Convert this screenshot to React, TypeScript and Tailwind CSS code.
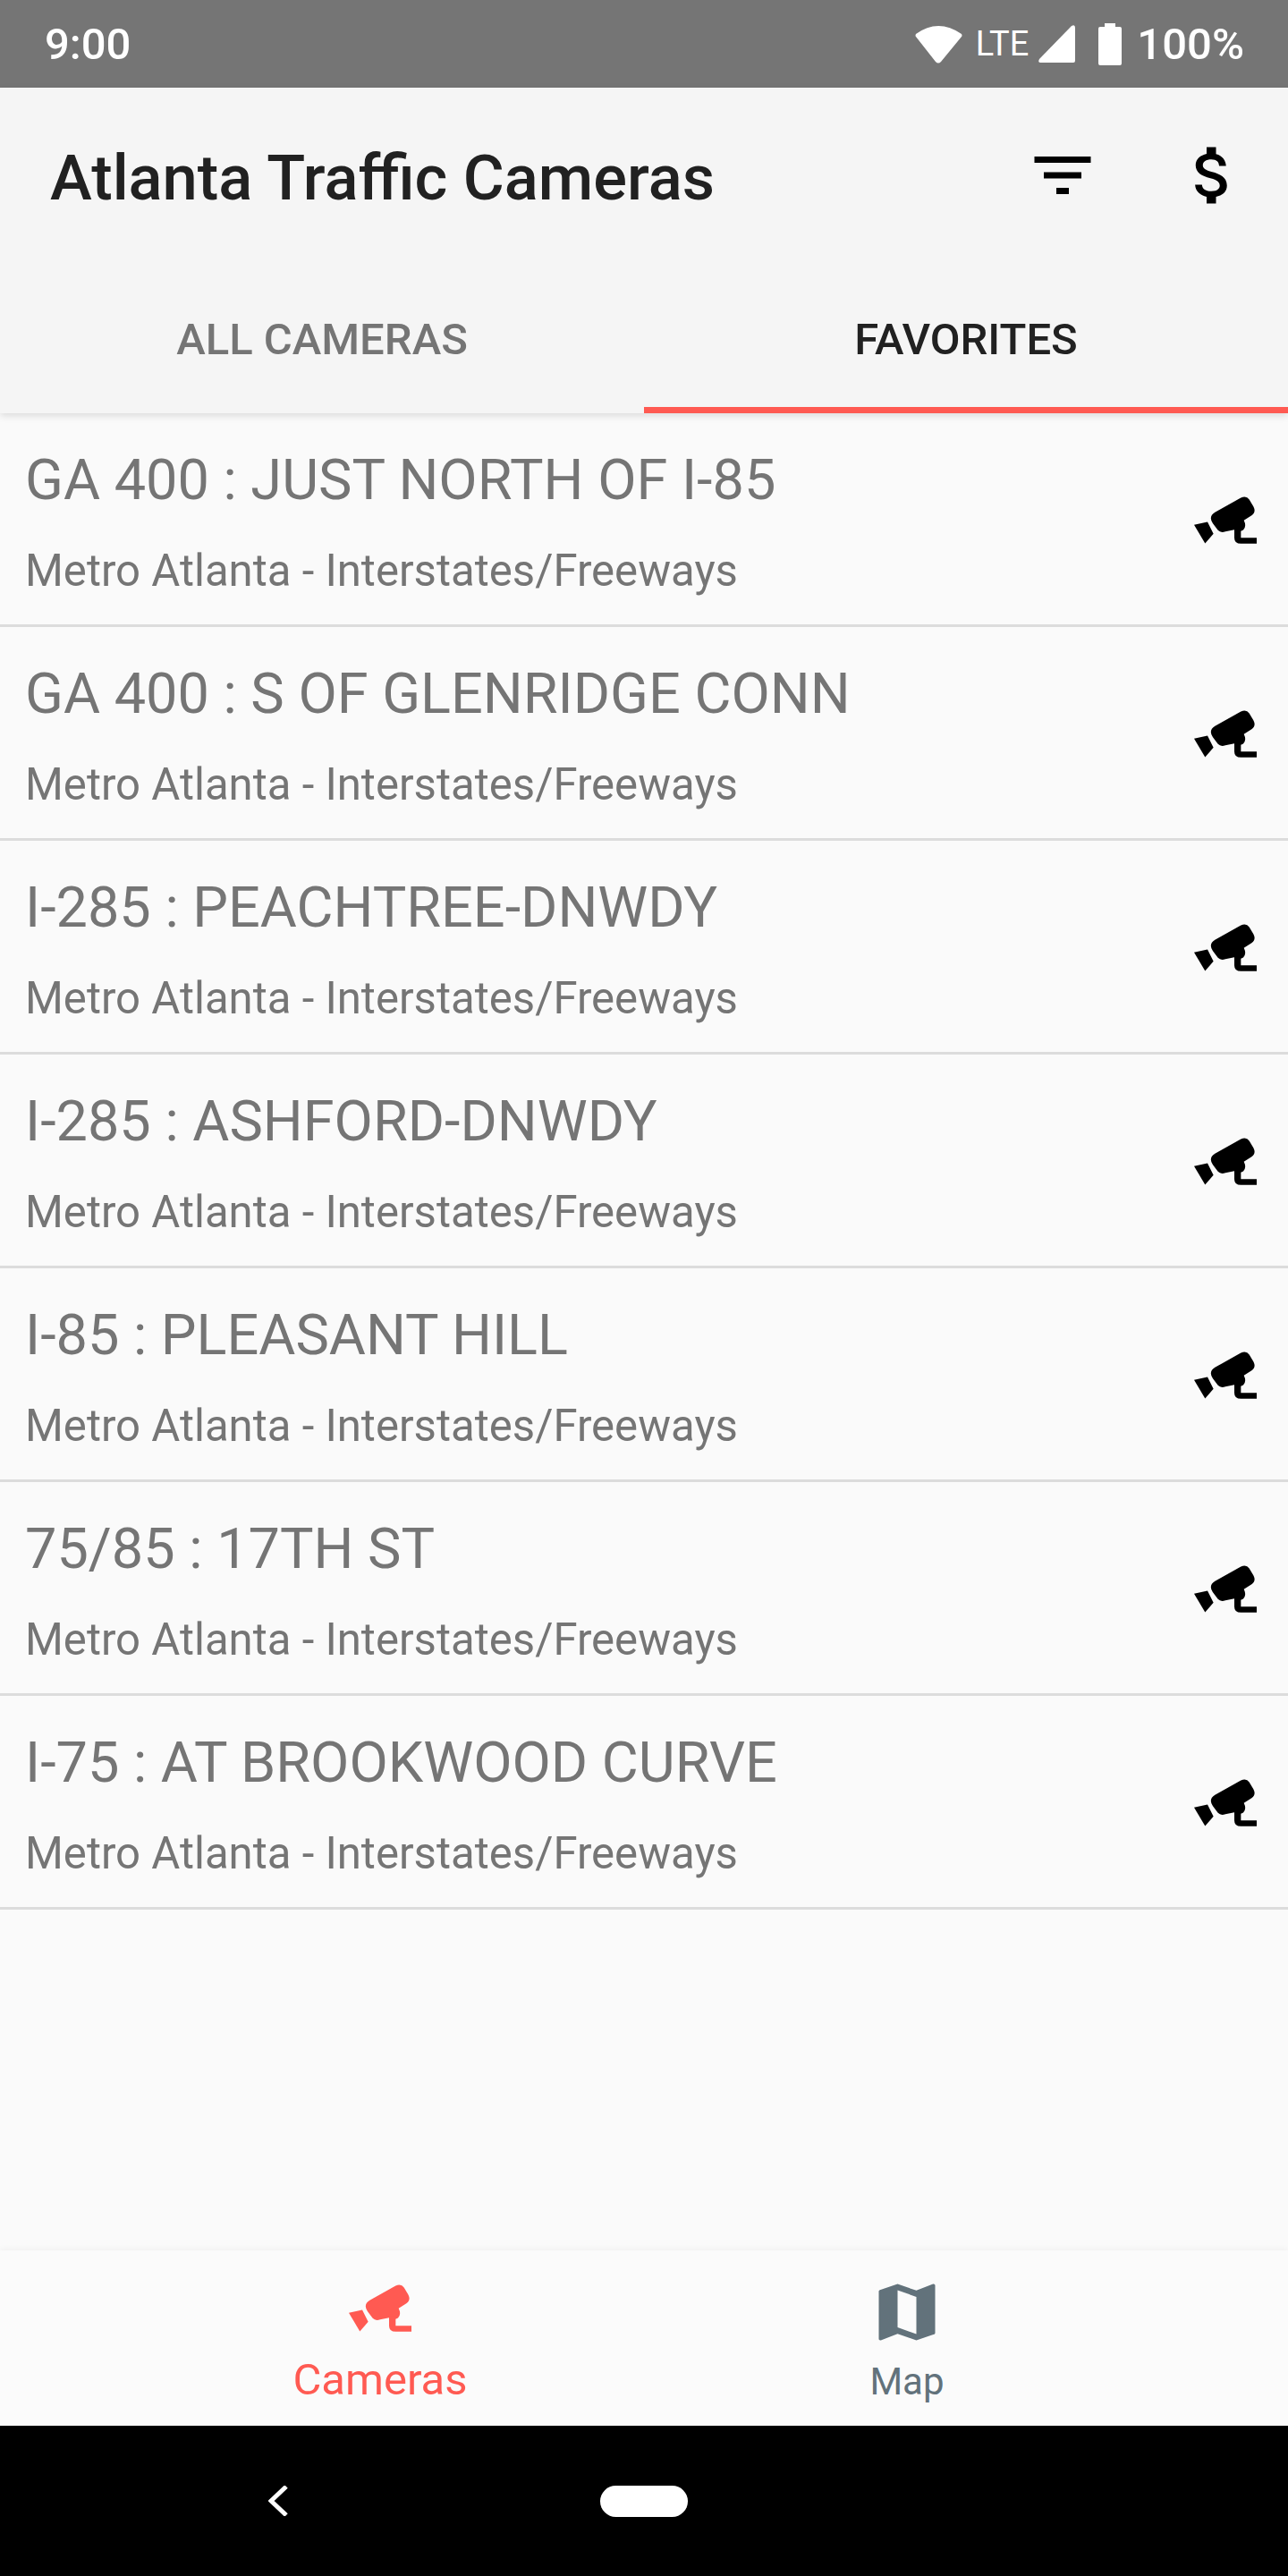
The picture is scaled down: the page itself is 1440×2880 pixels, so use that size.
import React from 'react';

const cameras = [
  'GA 400 : JUST NORTH OF I-85',
  'GA 400 : S OF GLENRIDGE CONN',
  'I-285 : PEACHTREE-DNWDY',
  'I-285 : ASHFORD-DNWDY',
  'I-85 : PLEASANT HILL',
  '75/85 : 17TH ST',
  'I-75 : AT BROOKWOOD CURVE',
];

const CctvIcon = ({ className }: { className: string }) => (
  <svg viewBox="105 75 210 158" className={className} fill="currentColor">
    <path d="M175 128 L262 79 Q280 70 290 85 L304 108 Q314 128 298 138 L272 155 Q282 175 270 187 Q258 196 240 186 L210 192 Q195 198 185 188 L168 165 Q152 142 175 128 Z" />
    <path d="M240 180 L262 180 L262 213 L315 213 L315 233 L262 233 Q240 233 240 213 Z" />
    <path d="M105 170 L150 160 L170 200 L142 232 Z" />
  </svg>
);

const CameraRow = ({ name }: { name: string }) => (
  <div className="h-[239px] border-b-[3px] border-[#dcdcdc] flex items-center justify-between pl-[28px] pr-[35px] shrink-0">
    <div className="flex flex-col pt-[7px]">
      <span className="text-[63px] leading-[74px] text-[#757575] mb-[35px]">{name}</span>
      <span className="text-[49.1px] leading-[58px] text-[#757575]">Metro Atlanta - Interstates/Freeways</span>
    </div>
    <CctvIcon className="w-[70px] h-[53px] text-black mt-[3px]" />
  </div>
);

export default function App() {
  return (
    <div className="w-[1440px] h-[2880px] flex flex-col bg-[#fafafa] overflow-hidden font-['Roboto',sans-serif]">
      {/* status bar */}
      <div className="h-[98px] bg-[#757575] flex items-center justify-between pl-[50px] pr-[49px] text-white shrink-0">
        <span className="text-[49px] leading-none font-medium">9:00</span>
        <div className="flex items-center">
          <svg viewBox="0 0 53 43" className="w-[53px] h-[43px]" fill="currentColor">
            <path d="M1 10 Q26 -8 52 10 Q53 12 52 13 L29 41 Q26 44 23 41 L1 13 Q0 12 1 10 Z" />
          </svg>
          <span className="text-[38px] leading-none ml-[15px]">LTE</span>
          <svg viewBox="0 0 43 43" className="w-[43px] h-[43px] ml-[10px]" fill="currentColor">
            <path d="M38 1 Q42 -1 42 3 L42 40 Q42 42 40 42 L3 42 Q0 42 2 38 Z" />
          </svg>
          <svg viewBox="0 0 26 47" className="w-[26px] h-[47px] ml-[25px]" fill="currentColor">
            <path d="M7 0 H19 V4 H24 Q26 4 26 6 V45 Q26 47 24 47 H2 Q0 47 0 45 V6 Q0 4 2 4 H7 Z" />
          </svg>
          <span className="text-[49px] leading-none font-medium ml-[17px]">100%</span>
        </div>
      </div>

      {/* app bar + tabs */}
      <div className="bg-[#f5f5f5] shrink-0 shadow-[0_3px_8px_rgba(0,0,0,0.12)] z-10">
        <div className="h-[196px] flex items-center pl-[56px] pr-[42px]">
          <span className="text-[70.5px] leading-none font-medium text-[#212121] flex-1 pt-[7px]">Atlanta Traffic Cameras</span>
          <svg viewBox="0 0 24 24" className="w-[84px] h-[84px] text-black" fill="currentColor">
            <path d="M10 18h4v-2h-4v2zM3 6v2h18V6H3zm3 7h12v-2H6v2z" />
          </svg>
          <svg viewBox="0 0 24 24" className="w-[84px] h-[84px] ml-[84px] text-black" fill="currentColor">
            <path d="M11.8 10.9c-2.27-.59-3-1.2-3-2.15 0-1.09 1.01-1.85 2.7-1.85 1.78 0 2.44.85 2.5 2.1h2.21c-.07-1.72-1.12-3.3-3.21-3.81V3h-3v2.16c-1.94.42-3.5 1.68-3.5 3.61 0 2.31 1.91 3.46 4.7 4.13 2.5.6 3 1.48 3 2.41 0 .69-.49 1.79-2.7 1.79-2.06 0-2.87-.92-2.98-2.1h-2.2c.12 2.19 1.76 3.42 3.68 3.83V21h3v-2.15c1.95-.37 3.5-1.5 3.5-3.55 0-2.84-2.43-3.81-4.7-4.4z" />
          </svg>
        </div>
        <div className="h-[168px] flex">
          <div className="w-[720px] flex items-center justify-center pt-[10px] border-b-[7px] border-transparent text-[49px] font-medium text-[#757575]">
            ALL CAMERAS
          </div>
          <div className="w-[720px] flex items-center justify-center pt-[10px] border-b-[7px] border-[#ff5a52] text-[49px] font-medium text-[#212121]">
            FAVORITES
          </div>
        </div>
      </div>

      {/* list */}
      <div className="flex-1 flex flex-col overflow-hidden">
        {cameras.map((name) => (
          <CameraRow key={name} name={name} />
        ))}
      </div>

      {/* bottom nav */}
      <div className="h-[196px] bg-[#fbfbfb] flex justify-center shrink-0 shadow-[0_-2px_6px_rgba(0,0,0,0.04)]">
        <div className="w-[590px] flex flex-col items-center pt-[38px]">
          <CctvIcon className="w-[70px] h-[53px] text-[#ff5a52]" />
          <span className="text-[49px] leading-[58px] mt-[25px] text-[#ff5a52]">Cameras</span>
        </div>
        <div className="w-[590px] flex flex-col items-center pt-[27px] pr-[2px]">
          <svg viewBox="0 0 24 24" className="w-[84px] h-[84px] text-[#62727b]" fill="currentColor">
            <path d="M20.5 3l-.16.03L15 5.1 9 3 3.36 4.9c-.21.07-.36.25-.36.48V20.5c0 .28.22.5.5.5l.16-.03L9 18.9l6 2.1 5.64-1.9c.21-.07.36-.25.36-.48V3.5c0-.28-.22-.5-.5-.5zM15 19l-6-2.11V5l6 2.11V19z" />
          </svg>
          <span className="text-[42px] leading-[50px] mt-[11px] text-[#62727b]">Map</span>
        </div>
      </div>

      {/* navigation bar */}
      <div className="h-[168px] bg-black flex items-center pl-[300px] shrink-0">
        <svg viewBox="0 0 22 34" className="w-[22px] h-[34px] text-white" fill="none" stroke="currentColor" strokeWidth="5">
          <path d="M20 1 L3 17 L20 33" />
        </svg>
        <div className="w-[98px] h-[35px] ml-[349px] bg-white rounded-full" />
      </div>
    </div>
  );
}
